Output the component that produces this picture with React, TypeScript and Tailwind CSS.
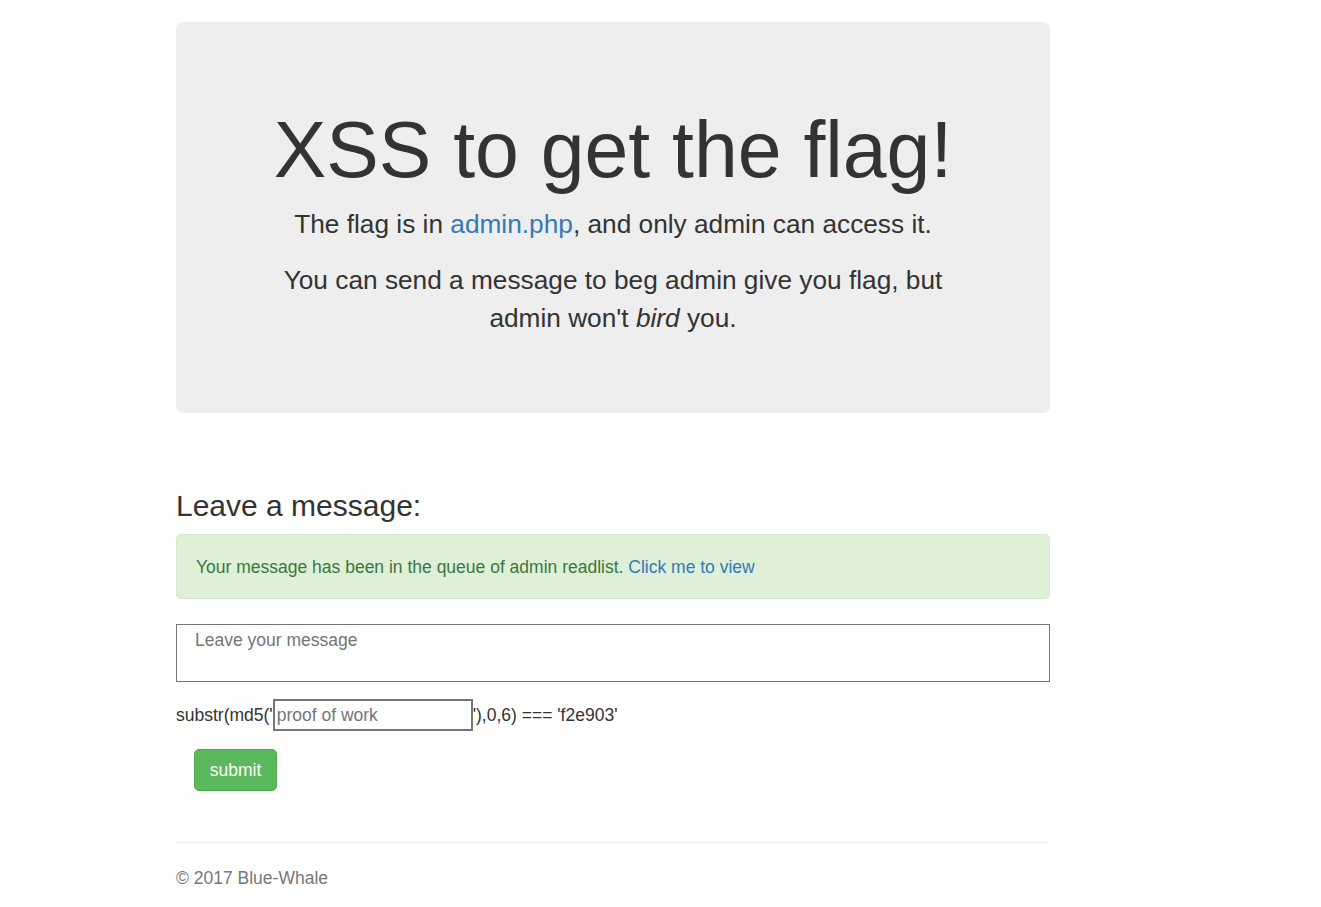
export default function App() {
  return (
    <div
      className="min-h-[907px] bg-white text-[#333] text-[17.5px] leading-[25px]"
      style={{ fontFamily: '"Liberation Sans", Arial, sans-serif' }}
    >
      <div className="ml-[176px] w-[874px] pt-[22px]">
        <div className="h-[391px] rounded-[7px] bg-[#eeeeee] px-[75px] pt-[60px] text-center">
          <h1 className="mt-[25px] mb-[12.5px] text-[78.75px] leading-[86.6px] font-normal">
            XSS to get the flag!
          </h1>
          <p className="mb-[18.75px] text-[26.25px] leading-[37.5px]">
            The flag is in <a href="#" className="text-[#337ab7]">admin.php</a>, and only admin can access it.
          </p>
          <p className="text-[26.25px] leading-[37.5px]">
            You can send a message to beg admin give you flag, but admin won't <i>bird</i> you.
          </p>
        </div>

        <h3 className="mt-[76px] mb-[12px] text-[30px] leading-[33px] font-normal">Leave a message:</h3>

        <div className="rounded-[5px] border border-[#d6e9c6] bg-[#dff0d8] px-[19px] pt-[20px] pb-[18px] text-[#3c763d]">
          Your message has been in the queue of admin readlist.{" "}
          <a href="#" className="text-[#337ab7]">Click me to view</a>
        </div>

        <textarea
          placeholder="Leave your message"
          className="mt-[25px] block h-[58px] w-[874px] resize-none border border-[#767676] pl-[18px] pt-[3px] text-[17.5px] leading-[25px] text-[#333] placeholder:text-[#757575] outline-none"
          style={{ fontFamily: '"Liberation Sans", Arial, sans-serif' }}
        />

        <div className="mt-[17px] flex h-[32px] items-center">
          <span>substr(md5('</span>
          <input
            placeholder="proof of work"
            className="h-[32px] w-[200px] border-2 border-[#767676] pl-[2px] text-[17.5px] text-[#333] placeholder:text-[#757575] outline-none"
            style={{ fontFamily: '"Liberation Sans", Arial, sans-serif' }}
          />
          <span>'),0,6) === 'f2e903'</span>
        </div>

        <button className="ml-[18px] mt-[18px] h-[42px] w-[83px] rounded-[5px] border border-[#4cae4c] bg-[#5cb85c] text-[17.5px] leading-[25px] text-white">
          submit
        </button>

        <div className="mt-[51px] h-px bg-[#eeeeee]" />

        <p className="mt-[23px] text-[#777]">© 2017 Blue-Whale</p>
      </div>
    </div>
  );
}
